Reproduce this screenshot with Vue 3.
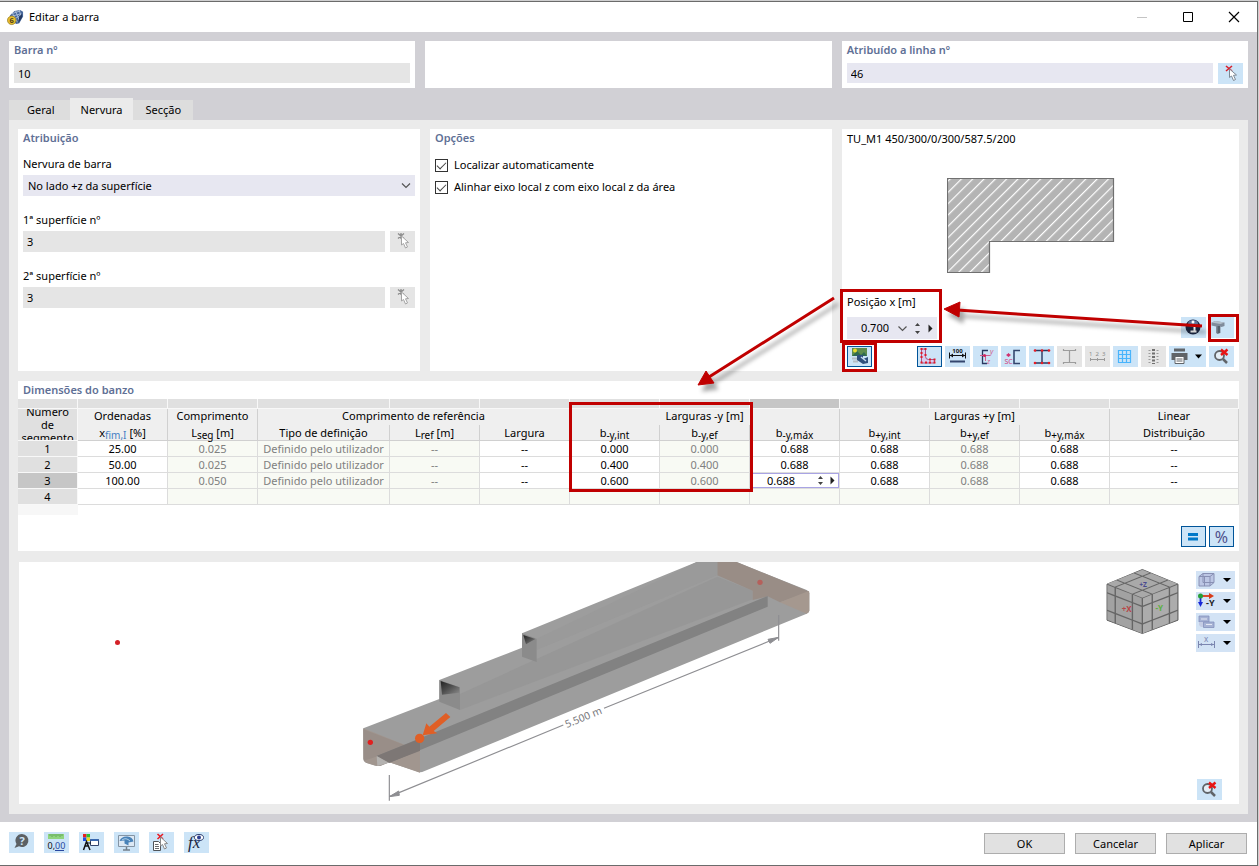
<script setup>
import { ref } from 'vue'

const icons = {
  pick: '<path d="M8 3l6 5M14 3L8 8" stroke="#d8202c" stroke-width="1.6"/><path d="M11.5 6v8.500l2-1.500 2 4.500 2-1-2-4.200 3-.3z" fill="#fff" stroke="#7c8894"/>',
  pickOff: '<path d="M8 2.500l6 5M14 2.500L8 7.500M11 2v6" stroke="#8c8c8c" stroke-width="1.300"/><path d="M11.500 5v9l2-1.500 2 4.500 2-1-2-4.200 3-.3z" fill="#fff" stroke="#a4a4a4"/>',
  image: '<rect x="5" y="2" width="15" height="8" fill="#5f8c4c"/><path d="M5 10l5-5 4 4 3-3 3 4z" fill="#2f6a50"/><circle cx="8" cy="4.500" r="2" fill="#e8dc30"/><path d="M5 12.500h6M6 15.500h5" stroke="#b4bcc4" stroke-width="2"/><path d="M10 9h6v4l5-2v6l-5 1-6-4z" fill="#2f4f7c"/><path d="M14 11l5 4" stroke="#c8dcf0" stroke-width="1.500"/>',
  ell: '<path d="M4.500 3h4v7.500q0 3 3 3h6V17h-13z" fill="#d8ccee" stroke="#a0306c" stroke-width=".8"/><g fill="#e01828"><path d="M3.500 2h2v2h-2zM7.500 2h2v2h-2zM3.500 6h2v2h-2zM3.500 10h2v2h-2zM3.500 15.500h2v2h-2zM8 15.500h2v2H8zM12 15.500h2v2h-2zM16.500 15.500h2v2h-2zM16.500 12.500h2v2h-2zM12 12.500h2v2h-2zM7.500 8h2v2h-2z"/></g>',
  hundred: '<text x="12.500" y="7" font-size="6" font-weight="700" text-anchor="middle" fill="#111">100</text><path d="M4.500 6.500v6M20.500 6.500v6M5 9.500h15" stroke="#111"/><path d="M5 9.500l3-2v4zM20 9.500l-3-2v4z" fill="#111"/><path d="M5 15.500h15" stroke="#34466e" stroke-width="2"/>',
  axes: '<path d="M15 4.500H9.500v13H14" stroke="#283860" stroke-width="1.300" fill="none"/><path d="M7 9.500h10M12.500 9v6" stroke="#d06090"/><circle cx="11.500" cy="9.500" r="1.600" fill="#d02860"/><text x="17" y="8" font-size="7" font-style="italic" fill="#d06090">y</text><text x="14" y="18" font-size="7" font-style="italic" fill="#d06090">z</text>',
  sc: '<circle cx="7.500" cy="9" r="1.600" fill="#d03070"/><path d="M5 9h5M7.500 7v4" stroke="#d03070" stroke-width=".7"/><text x="3.500" y="18" font-size="7" fill="#d04080">SC</text><path d="M19 4.500h-6v13h6" stroke="#34466e" stroke-width="1.600" fill="none"/>',
  beam: '<path d="M6 4.500h14M6 17h14M13 4.500V17" stroke="#283860" stroke-width="1.400"/><g fill="#e81c24"><circle cx="6" cy="4.500" r="1.300"/><circle cx="20" cy="4.500" r="1.300"/><circle cx="13" cy="4.500" r="1.300"/><circle cx="6" cy="17" r="1.300"/><circle cx="20" cy="17" r="1.300"/><circle cx="13" cy="17" r="1.300"/></g>',
  beamOff: '<path d="M6 4.500h13M6 16.500h13M12.500 4.500v12M6.500 3v2M18.500 3v2M6.500 16v2M18.500 16v2" stroke="#9c9c9c" stroke-width="1.200"/>',
  numbers: '<text x="4" y="9.500" font-size="6" fill="#8c8c8c">1</text><text x="10.500" y="9.500" font-size="6" fill="#8c8c8c">2</text><text x="17" y="9.500" font-size="6" fill="#8c8c8c">3</text><path d="M5 13.500h15M5.500 12v3M12.500 12v3M19.500 12v3" stroke="#9a9a9a"/>',
  grid: '<path d="M5.500 4.500h12v12h-12zM9.500 4.500v12M13.500 4.500v12M5.500 8.500h12M5.500 12.500h12" stroke="#48b4fc" fill="none" stroke-width="1.200"/>',
  stack: '<path d="M12.500 3v15" stroke="#707070" stroke-width="3" stroke-dasharray="2 1.500"/><path d="M8.500 4v13M16.500 4v13" stroke="#9c9c9c" stroke-width="2" stroke-dasharray="1 2"/>',
  print: '<path d="M5 2.500h11v3H5z" fill="#606468"/><path d="M2.500 7h16v7h-16z" fill="#606468"/><path d="M6 10.500h9v7H6z" fill="#fff" stroke="#606468"/><path d="M7.500 13h6M7.500 15h6" stroke="#606468"/><path d="M26 8.500h7l-3.500 4z" fill="#000"/>',
  zoomOff: '<circle cx="10.500" cy="9.500" r="4.500" fill="#e4eef6" stroke="#606468" stroke-width="1.800"/><path d="M14 13l4 4" stroke="#606468" stroke-width="2.500"/><path d="M12 3.500l6.500 5.500M18.500 3.500L12 9" stroke="#e81414" stroke-width="2.400"/>',
  info: '<circle cx="12" cy="10" r="7.500" fill="#1c2844"/><ellipse cx="12" cy="6.500" rx="5" ry="3.500" fill="#62759a"/><path d="M10 8h3.500v6M9.500 14.500h6" stroke="#fff" stroke-width="2" fill="none"/><circle cx="12" cy="5" r="1.500" fill="#fff"/>',
  tee: '<path d="M2.500 5.500l4-1.500 9 1.500V9l-3 1-1-.5V16l-3 1-1.500-1V9.500l-4.500-1z" fill="#808c9c"/><path d="M2.500 5.500l4-1.500 9 1.500-4 1.500z" fill="#b4c0cc"/><path d="M8.500 9v7.500l2.500-.8V9z" fill="#56626e"/>',
  equal: '<path d="M7 8.500h10M7 13h10" stroke="#0078c8" stroke-width="3"/>',
  help: '<path d="M13 2a6.500 6.500 0 1 1-3 12.300L5.500 16l2-4A6.500 6.500 0 0 1 13 2z" fill="#5c6064"/><text x="13" y="12.500" font-size="11" font-weight="700" text-anchor="middle" fill="#cce4f7">?</text>',
  decimals: '<path d="M4 2h16v5H4z" fill="#8fd47e"/><path d="M6 2v2M8 2v3M10 2v2M12 2v3M14 2v2M16 2v3M18 2v2" stroke="#589c50" stroke-width=".8"/><text x="3.500" y="16.500" font-size="9" fill="#111">0,<tspan fill="#2848a0">00</tspan></text><path d="M11 18.500h9" stroke="#2848a0"/>',
  display: '<path d="M4 2h3.500v3.500H4z" fill="#e82020"/><path d="M7.500 2H11v3.500H7.500z" fill="#30c030"/><path d="M4 5.500h3.500V9H4z" fill="#2050e0"/><path d="M7.500 5.500H11V9H7.500z" fill="#f0d820"/><path d="M4.500 18L7.500 9.500 11 18M5.500 14h4.500" stroke="#111" stroke-width="1.500" fill="none"/><path d="M11.500 7.500h8v6h-8z" fill="#fff" stroke="#34466e"/><path d="M11.500 8h8" stroke="#3868b0" stroke-width="2"/><path d="M7 11h5" stroke="#111"/>',
  monitor: '<path d="M4.500 3.500h16v11h-16z" fill="#dce8f4" stroke="#8494a4"/><path d="M5.500 9q2-5 8-4.500 5 .5 6 5l-5 1v3l-4-2v-3z" fill="#4882b8"/><path d="M8 8q4-3 8 1" stroke="#b0d0ea" fill="none"/><path d="M12.500 15v2.500M9 18h7" stroke="#74808c" stroke-width="1.500"/>',
  listPick: '<path d="M8.500 2l5.500 5M14 2L8.500 7" stroke="#e81c24" stroke-width="1.600"/><path d="M4.500 9.500h5l2 2v7h-7z" fill="#fff" stroke="#505458"/><path d="M6 12.500h3.500M6 14.500h4M6 16.500h4" stroke="#404448" stroke-width=".8"/><path d="M11.500 5v9l2-1.500 2 4.500 2-1-2-4.200 3-.3z" fill="#fff" stroke="#888"/>',
  formula: '<text x="4" y="16" font-size="17" font-style="italic" font-family="Liberation Serif, serif" fill="#18243c">fx</text><ellipse cx="15" cy="5.500" rx="4.500" ry="3" fill="#fff" stroke="#2c3e70"/><circle cx="15" cy="5.500" r="2" fill="#2c3e90"/>',
  cube: '<path d="M3 5.500l4-3h11v9l-4 3.500H3z" fill="#bcc6e4" stroke="#8890b4"/><path d="M3 5.500h11V15M14 5.500l4-3M7 2.500v9M7 11.500h11M8.500 5.500V15" stroke="#8890b4" fill="none"/>',
  viewY: '<path d="M5 4h10" stroke="#d83c18" stroke-width="1.800"/><path d="M13 1l5 3-5 3z" fill="#d83c18"/><path d="M4.500 4v7" stroke="#1828d8" stroke-width="1.800"/><path d="M2 10h5l-2.500 5z" fill="#1828d8"/><circle cx="4.500" cy="4" r="2.500" fill="#28a038"/><text x="10" y="14" font-size="9" font-weight="700" fill="#222">-Y</text>',
  solids: '<path d="M3 3h10v6H3z" fill="#a6b2d4" stroke="#8490bc" stroke-width=".8"/><path d="M3 9h5v5H5l-2-2z" fill="#c4cce4"/><path d="M7.500 9h10.500v5.500H7.500z" fill="#a6b2d4" stroke="#8490bc" stroke-width=".8"/><path d="M5 6h6M10 11.500h6" stroke="#e4e8f4"/>',
  dimX: '<path d="M2.500 7v7M18.500 7v7M2.500 10.500h16" stroke="#7c86b0"/><path d="M3 10.500l3-1.500v3zM18 10.500l-3-1.500v3z" fill="#7c86b0"/><text x="8" y="8" font-size="8" fill="#7c86b0">x</text>'
}

const sectionTools = [
  { id: 'ell', name: 'Contorno', active: true }, { id: 'hundred', name: 'Cotas' },
  { id: 'axes', name: 'Eixos' }, { id: 'sc', name: 'Centro de corte' },
  { id: 'beam', name: 'Pontos' }, { id: 'beamOff', name: 'Perfil', off: true },
  { id: 'numbers', name: 'Numeração', off: true }, { id: 'grid', name: 'Grelha' },
  { id: 'stack', name: 'Tensões', off: true }, { id: 'print', name: 'Imprimir', wide: true },
  { id: 'zoomOff', name: 'Repor vista' }
]
const viewTools = [
  { id: 'cube', name: 'Vista' }, { id: 'viewY', name: 'Direção' },
  { id: 'solids', name: 'Modelo' }, { id: 'dimX', name: 'Dimensões' }
]
const footerTools = [
  { id: 'help', name: 'Ajuda' }, { id: 'decimals', name: 'Unidades' },
  { id: 'display', name: 'Apresentação' }, { id: 'monitor', name: 'Visualização' },
  { id: 'listPick', name: 'Selecionar' }, { id: 'formula', name: 'Fórmulas' }
]

const tabs = ['Geral', 'Nervura', 'Secção']
const activeTab = ref('Nervura')
const member = ref('10')
const line = ref('46')
const surface1 = ref('3')
const surface2 = ref('3')
const autoLocate = ref(true)
const alignAxis = ref(true)
const position = ref('0.700')
const editValue = ref('0.688')

const colWidths = [60, 90, 90, 132, 90, 90, 90, 90, 90, 90, 90, 90]
const subHeads = [
  { t: 'x', s: 'fim,I', u: ' [%]', blue: true }, { t: 'L', s: 'seg', u: ' [m]' },
  { t: 'Tipo de definição' }, { t: 'L', s: 'ref', u: ' [m]' }, { t: 'Largura' },
  { t: 'b', s: '-y,int' }, { t: 'b', s: '-y,ef' }, { t: 'b', s: '-y,máx' },
  { t: 'b', s: '+y,int' }, { t: 'b', s: '+y,ef' }, { t: 'b', s: '+y,máx' },
  { t: 'Distribuição' }
]
const readonlyCols = [1, 2, 3, 6, 9]
const def = 'Definido pelo utilizador'
const rows = [
  ['25.00', '0.025', def, '--', '--', '0.000', '0.000', '0.688', '0.688', '0.688', '0.688', '--'],
  ['50.00', '0.025', def, '--', '--', '0.400', '0.400', '0.688', '0.688', '0.688', '0.688', '--'],
  ['100.00', '0.050', def, '--', '--', '0.600', '0.600', '0.688', '0.688', '0.688', '0.688', '--'],
  ['', '', '', '', '', '', '', '', '', '', '', '']
]
const isReadonly = (r, c) => readonlyCols.includes(c) || (r === 3 && c > 0)

// Navigation cube: each face is a 3 x 3 grid of tiles.
function faceTiles(o, u, v) {
  const cuts = [[0, 0.21], [0.25, 0.71], [0.75, 1]]
  const at = (a, b) => `${o[0] + u[0] * a + v[0] * b},${o[1] + u[1] * a + v[1] * b}`
  return cuts.flatMap(([a, b]) => cuts.map(([c, d]) => [at(a, c), at(b, c), at(b, d), at(a, d)].join(' ')))
}
const cubeTiles = [
  { fill: '#a9a9a9', tiles: faceTiles([187, 45], [105, 42], [-105, 42]) },
  { fill: '#a2a2a2', tiles: faceTiles([82, 90], [103, 40], [0, 105]) },
  { fill: '#acacac', tiles: faceTiles([292, 90], [-103, 40], [0, 105]) }
]
</script>

<template>
  <div class="desktop">
    <main class="window">
      <header class="titlebar">
        <svg class="appicon" viewBox="0 0 18 18" aria-hidden="true">
          <path d="M3 7l5-5 6-1 3 2v5l-4 7-3 1-5-3z" fill="#48689c" />
          <path d="M5 5l9-3M4 8l11-3M6 12l9-6M9 2l4 10M13 1l2 8M6 5l5 9" stroke="#bccce4" stroke-width=".8" />
          <path d="M13 8l3-3v4l-4 6z" fill="#243860" />
          <circle cx="5" cy="12" r="4.500" fill="#e8c030" stroke="#8c7018" stroke-width=".7" />
          <text x="5" y="15" font-size="8" font-weight="700" text-anchor="middle" fill="#544418">6</text>
        </svg>
        <h1>Editar a barra</h1>
        <div class="winbtns">
          <button type="button" aria-label="Minimizar" disabled><svg viewBox="0 0 12 12"><path d="M1 6.500h10" stroke="#c4c4c4" /></svg></button>
          <button type="button" aria-label="Maximizar"><svg viewBox="0 0 12 12"><path d="M1.500 1.500h9v9h-9z" fill="none" stroke="#000" /></svg></button>
          <button type="button" aria-label="Fechar"><svg viewBox="0 0 12 12"><path d="M1 1l10 10M11 1L1 11" stroke="#000" stroke-width="1.200" /></svg></button>
        </div>
      </header>

      <div class="body">
        <div class="top">
          <section class="card">
            <h2><label for="member">Barra nº</label></h2>
            <input id="member" v-model="member" class="field short ro" readonly />
          </section>
          <section class="card"></section>
          <section class="card">
            <h2><label for="line">Atribuído a linha nº</label></h2>
            <div class="row">
              <input id="line" v-model="line" class="field short" />
              <button type="button" class="tool" aria-label="Selecionar linha"><svg viewBox="0 0 25 21" v-html="icons.pick"></svg></button>
            </div>
          </section>
        </div>

        <nav class="tabs">
          <button v-for="t in tabs" :key="t" type="button" :class="{ on: t === activeTab }" @click="activeTab = t">{{ t }}</button>
        </nav>

        <div class="panel">
          <div class="cols">
            <section class="card">
              <h2>Atribuição</h2>
              <div class="groups">
                <div class="group">
                  <label for="rib">Nervura de barra</label>
                  <div class="selectbox">
                    <select id="rib"><option>No lado +z da superfície</option></select>
                    <svg viewBox="0 0 9 6"><path d="M.5 .5l4 4 4-4" fill="none" stroke="#555" stroke-width="1.200" /></svg>
                  </div>
                </div>
                <div class="group">
                  <label for="s1">1ª superfície nº</label>
                  <div class="row">
                    <input id="s1" v-model="surface1" class="field ro" readonly />
                    <button type="button" class="tool off" disabled aria-label="Selecionar 1ª superfície"><svg viewBox="0 0 25 21" v-html="icons.pickOff"></svg></button>
                  </div>
                </div>
                <div class="group">
                  <label for="s2">2ª superfície nº</label>
                  <div class="row">
                    <input id="s2" v-model="surface2" class="field ro" readonly />
                    <button type="button" class="tool off" disabled aria-label="Selecionar 2ª superfície"><svg viewBox="0 0 25 21" v-html="icons.pickOff"></svg></button>
                  </div>
                </div>
              </div>
            </section>

            <section class="card">
              <h2>Opções</h2>
              <div class="checks">
                <label><input v-model="autoLocate" type="checkbox" /><span>Localizar automaticamente</span></label>
                <label><input v-model="alignAxis" type="checkbox" /><span>Alinhar eixo local z com eixo local z da área</span></label>
              </div>
            </section>

            <section class="card profile">
              <p class="pname">TU_M1 450/300/0/300/587.5/200</p>
              <svg class="shape" viewBox="0 0 170 98" aria-hidden="true">
                <defs>
                  <pattern id="hatch" width="8" height="8" patternUnits="userSpaceOnUse" patternTransform="rotate(45)">
                    <rect width="8" height="8" fill="#b4b4b4" />
                    <rect x="3" width="1.200" height="8" fill="#fff" />
                  </pattern>
                </defs>
                <path d="M.5 1.500h166v63h-124v31H.5z" fill="url(#hatch)" stroke="#707070" stroke-width="1.200" />
              </svg>
              <div class="posrow">
                <div>
                  <label class="poslabel" for="pos">Posição x [m]</label>
                  <div class="posfield">
                    <input id="pos" v-model="position" />
                    <button type="button" aria-label="Lista"><svg viewBox="0 0 9 21"><path d="M.5 8.500l4 4 4-4" fill="none" stroke="#555" stroke-width="1.200" /></svg></button>
                    <button type="button" aria-label="Passo"><svg viewBox="0 0 5 21"><path d="M0 8l2.500-3L5 8zM0 13l2.500 3L5 13z" fill="#444" /></svg></button>
                    <button type="button" aria-label="Seguinte"><svg viewBox="0 0 5 21"><path d="M.5 6.500v8l4-4z" fill="#222" /></svg></button>
                  </div>
                </div>
                <div class="tools">
                  <button type="button" class="tool" aria-label="Informação"><svg viewBox="0 0 25 21" v-html="icons.info"></svg></button>
                  <button type="button" class="tool" aria-label="Secção em T"><svg viewBox="0 0 25 21" v-html="icons.tee"></svg></button>
                </div>
              </div>
              <div class="toolrow">
                <button type="button" class="tool active" aria-label="Imagem"><svg viewBox="0 0 25 21" v-html="icons.image"></svg></button>
                <div class="tools">
                  <button v-for="b in sectionTools" :key="b.id" type="button" class="tool" :class="{ active: b.active, off: b.off, wide: b.wide }" :disabled="b.off" :aria-label="b.name">
                    <svg :viewBox="b.wide ? '0 0 37 21' : '0 0 25 21'" v-html="icons[b.id]"></svg>
                  </button>
                </div>
              </div>
            </section>
          </div>

          <section class="card dims">
            <h2>Dimensões do banzo</h2>
            <table>
              <colgroup>
                <col v-for="(w, i) in colWidths" :key="i" :class="'w' + w" />
                <col />
              </colgroup>
              <thead>
                <tr class="strip"><td v-for="n in 13" :key="n" :class="{ sel: n === 9 }"></td></tr>
                <tr class="h1">
                  <th rowspan="2" class="num"><div>Número de segmento</div></th>
                  <th>Ordenadas</th>
                  <th>Comprimento</th>
                  <th colspan="3" class="open">Comprimento de referência</th>
                  <th colspan="3">Larguras -y [m]</th>
                  <th colspan="3">Larguras +y [m]</th>
                  <th>Linear</th>
                </tr>
                <tr class="h2">
                  <th v-for="(h, i) in subHeads" :key="i" :class="{ open: i === 4 }">{{ h.t }}<sub v-if="h.s" :class="{ blue: h.blue }">{{ h.s }}</sub>{{ h.u }}</th>
                </tr>
              </thead>
              <tbody>
                <tr v-for="(r, ri) in rows" :key="ri">
                  <th scope="row" :class="{ sel: ri === 2 }">{{ ri + 1 }}</th>
                  <td v-for="(c, ci) in r" :key="ci" :class="{ ro: isReadonly(ri, ci) }">
                    <div v-if="ri === 2 && ci === 7" class="editor">
                      <input v-model="editValue" aria-label="b-y,máx" />
                      <button type="button" aria-label="Passo"><svg viewBox="0 0 5 13"><path d="M0 5l2.500-3L5 5zM0 8l2.500 3L5 8z" fill="#444" /></svg></button>
                      <button type="button" aria-label="Seguinte"><svg viewBox="0 0 5 13"><path d="M.5 2.500v8l4-4z" fill="#222" /></svg></button>
                    </div>
                    <template v-else>{{ c }}</template>
                  </td>
                </tr>
              </tbody>
            </table>
            <div class="gutter"></div>
            <div class="tools right">
              <button type="button" class="tool active" aria-label="Igual"><svg viewBox="0 0 25 21" v-html="icons.equal"></svg></button>
              <button type="button" class="tool active pct">%</button>
            </div>
          </section>

          <section class="card view">
            <svg class="scene" viewBox="19 562 1220 242" preserveAspectRatio="xMinYMin slice" role="img" aria-label="Modelo 3D da barra">
              <defs>
                <linearGradient id="hole" x1="0" y1="0" x2="1" y2="1">
                  <stop offset="0" stop-color="#222" /><stop offset=".45" stop-color="#4c4c4c" /><stop offset="1" stop-color="#8c8c8c" />
                </linearGradient>
              </defs>
              <circle cx="117.500" cy="642.500" r="2.500" fill="#d42027" />
              <g transform="translate(350 550) scale(.33333)">
                <path d="M40 535L268 447V390L435 325 516 293V250L1040 36H1160L1370 120Q1378 124 1378 130V182Q1378 187 1370 191L222 664Q210 670 198 663L118 637 92 647Q82 650 72 646L48 638Q40 634 40 626Z" fill="#9d9d9d" />
                <path d="M330 432L1102 80 1208 122V148L330 480Z" fill="#979797" />
                <path d="M1040 36H1160L1378 125 1290 157 1253 139 1208 150V122L1102 76V36Z" fill="#998d86" />
                <path d="M1290 157L1376 123Q1378 126 1378 130V182Q1378 187 1370 191Z" fill="#a5988f" />
                <path d="M1040 36H1102V76L960 136 560 300V266Z" fill="#9a9a9a" />
                <path d="M40 535L210 603V668L118 637 92 647Q82 650 72 646L48 638Q40 634 40 626Z" fill="#a1968f" />
                <path d="M40 538L210 603 118 637 85 618 42 632Z" fill="#998e88" />
                <path d="M80 618L1253 138V170L118 638Z" fill="#828282" />
                <path d="M80 618L210 566V602L118 638Z" fill="#7d7775" />
                <path d="M80 618L116 638 82 648Z" fill="#b4b2b0" />
                <path d="M268 390L330 412V480L268 455Z" fill="#8b8b8b" />
                <path d="M272 393L328 412V428L276 434Z" fill="url(#hole)" />
                <path d="M516 250L560 266V336L516 320Z" fill="#8b8b8b" />
                <path d="M520 255L556 267 528 283Z" fill="url(#hole)" />
                <circle cx="61" cy="577" r="8" fill="#e0201f" />
                <circle cx="1230" cy="97" r="8" fill="#b5605b" />
                <circle cx="209" cy="565" r="14" fill="#e05f26" />
                <path d="M218 556L229 520 238 530 288 489 301 501 251 543 262 550Z" fill="#e05f26" />
                <path d="M118 675V752M1286 195V272M118 740L640 525M762 475L1286 262" stroke="#8e8e92" stroke-width="3.500" fill="none" />
                <path d="M118 740L146 723 148 736ZM1286 262L1254 268 1260 280Z" fill="#8e8e92" stroke="#8e8e92" stroke-width="3" />
                <text transform="translate(704 512) rotate(-22)" font-size="31" text-anchor="middle" fill="#77777b">5.500 m</text>
              </g>
            </svg>
            <svg class="navcube" viewBox="78 40 219 200" aria-label="Cubo de navegação">
              <path d="M187 44L294 88V196L187 236 81 196V88Z" fill="#656565" stroke="#656565" stroke-width="3" stroke-linejoin="round" />
              <g v-for="(f, i) in cubeTiles" :key="i" :fill="f.fill">
                <polygon v-for="p in f.tiles" :key="p" :points="p" />
              </g>
              <text x="189" y="96" font-size="20" font-weight="700" text-anchor="middle" fill="#4a4a90">+Z</text>
              <text x="140" y="171" font-size="24" font-weight="700" text-anchor="middle" fill="#b84848">+X</text>
              <text x="238" y="168" font-size="24" font-weight="700" text-anchor="middle" fill="#5cb040">-Y</text>
            </svg>
            <div class="viewtools">
              <button v-for="b in viewTools" :key="b.id" type="button" :aria-label="b.name">
                <svg viewBox="0 0 21 18" v-html="icons[b.id]"></svg>
                <svg class="drop" viewBox="0 0 8 4"><path d="M0 0h8L4 4z" /></svg>
              </button>
            </div>
            <button type="button" class="tool reset" aria-label="Repor vista"><svg viewBox="0 0 25 21" v-html="icons.zoomOff"></svg></button>
          </section>
        </div>
      </div>

      <footer class="footer">
        <div class="ftools">
          <button v-for="b in footerTools" :key="b.id" type="button" class="tool" :aria-label="b.name"><svg viewBox="0 0 25 21" v-html="icons[b.id]"></svg></button>
        </div>
        <div class="actions">
          <button type="button">OK</button>
          <button type="button">Cancelar</button>
          <button type="button">Aplicar</button>
        </div>
      </footer>
    </main>

    <svg class="marks" width="1259" height="866" aria-hidden="true">
      <g class="arrows" fill="#c00000" stroke="#c00000">
        <path d="M1202 326L957 310M834 298L709 377" stroke-width="3" />
        <path d="M944 309L960 302 959 317ZM698 385L706 371 714 383Z" stroke-width="1" />
      </g>
      <g fill="none" stroke="#c00000" stroke-width="3">
        <rect x="841.500" y="290.500" width="99" height="51" />
        <rect x="843.500" y="343.500" width="32" height="27" />
        <rect x="1209.500" y="315.500" width="28" height="25" />
        <rect x="570.500" y="403.500" width="181" height="87" />
      </g>
    </svg>
  </div>
</template>

<style>
body { margin: 0; background: #cfcfd0; }
</style>

<style scoped>
* { box-sizing: border-box; }
.desktop { position: relative; min-height: 100vh; padding: 1px 1px 1px 0; background: #cfcfd0; font: 11px/16px "Noto Sans", "Open Sans", sans-serif; color: #000; }
button, input, select { font: inherit; color: inherit; margin: 0; }
button { border: 0; padding: 0; background: none; }
h1, h2, p { margin: 0; font-size: 11px; font-weight: 400; }
.window { border: solid #6b6b6b; border-width: 1px 1px 1px 0; background: #fff; }
.titlebar { display: flex; align-items: center; height: 30px; padding-left: 7px; }
.titlebar h1 { flex: 1; margin-left: 5px; }
.appicon { width: 17px; height: 17px; }
.winbtns { display: flex; }
.winbtns button { width: 46px; height: 30px; display: flex; align-items: center; justify-content: center; }
.winbtns svg { width: 12px; height: 12px; }
.body { background: #d1d0d5; padding: 9px 9px 8px; }
.top { display: grid; grid-template-columns: repeat(3, 1fr); gap: 10px; margin-bottom: 10px; }
.card { background: #fff; padding: 0 5px 4px; min-width: 0; }
.top .card { min-height: 47px; }
h2 { line-height: 18px; font-weight: 600; color: #5f7096; }
.top h2 { margin-bottom: 4px; }
.row { display: flex; gap: 5px; }
.field { display: block; width: 100%; min-width: 0; height: 21px; border: 0; padding: 0 4px; background: #e7e7f1; }
.field.ro { background: #e5e5e5; }
.field.short { height: 20px; }
.tool { flex: none; width: 25px; height: 21px; background: #cce4f7; display: block; }
.tool svg { display: block; width: 100%; height: 100%; }
.tool.wide { width: 37px; }
.tool.off { background: #e5e5e5; }
.tool.active { box-shadow: inset 0 0 0 1px #005499; }
.tools { display: flex; gap: 3px; }
.tabs { display: flex; align-items: flex-end; height: 22px; }
.tabs button { height: 20px; padding: 0 12px 0 13px; background: #dddddd; }
.tabs button:first-child { padding: 0 15px 0 18px; }
.tabs .on { height: 22px; background: #ebebeb; padding: 2px 10px 0 11px; }
.panel { background: #ebebeb; padding: 9px 9px 10px; }
.cols { display: grid; grid-template-columns: 402fr 402fr 397fr; gap: 10px; margin-bottom: 10px; }
.groups { display: grid; gap: 14px; margin-top: 7px; }
.group > label { display: block; line-height: 19px; margin-bottom: 2px; }
.selectbox { position: relative; }
.selectbox select { display: block; width: 100%; height: 21px; border: 0; border-radius: 0; appearance: none; background: #e7e7f1; padding: 0 5px; }
.selectbox svg { position: absolute; right: 4px; top: 8px; width: 10px; height: 6px; pointer-events: none; }
.checks { display: grid; margin-top: 7px; }
.checks label { display: flex; align-items: center; gap: 6px; height: 22px; }
.checks input { appearance: none; width: 13px; height: 13px; border: 1px solid #333; display: grid; place-items: center; }
.checks input:checked::after { content: ""; width: 8px; height: 4px; border: solid #444; border-width: 0 0 1px 1px; transform: translateY(-1px) rotate(-45deg); }
.profile { display: flex; flex-direction: column; min-height: 242px; }
.pname { line-height: 20px; }
.shape { display: block; width: 170px; height: 98px; margin: 28px 0 0 100px; }
.posrow { display: flex; justify-content: space-between; align-items: flex-end; margin-top: auto; }
.posrow > .tools { margin-bottom: 1px; }
.poslabel { display: block; line-height: 20px; margin-bottom: 5px; }
.posfield { display: flex; width: 90px; height: 22px; background: #e7e7f1; padding-right: 4px; }
.posfield input { flex: 1; min-width: 0; border: 0; background: none; text-align: right; padding: 0 9px 0 0; }
.posfield button { margin-left: 8px; }
.posfield input + button { margin-left: 0; }
.posfield svg { display: block; height: 21px; width: auto; }
.toolrow { display: flex; justify-content: space-between; margin-top: 7px; }
.dims { padding: 0 0 4px; margin-bottom: 11px; }
.dims h2 { padding-left: 5px; }
table { width: 100%; table-layout: fixed; border-collapse: separate; border-spacing: 0; }
.w60 { width: 60px; }
.w90 { width: 90px; }
.w132 { width: 132px; }
td, th { padding: 0; height: 16px; line-height: 15px; font-weight: 400; text-align: center; white-space: nowrap; border-right: 1px solid #dcdcdc; border-bottom: 1px solid #dcdcdc; }
.strip td { height: 10px; line-height: 9px; background: #e0e0e0; border-color: #f8f8f8; }
.strip .sel { background: #c6c6c6; }
thead th { background: #efefef; border-color: #d0d0d0; }
.h1 th { border-bottom: 0; line-height: 14px; vertical-align: top; }
thead .open { border-right-color: #efefef; }
.h1 .num { background: #e0e0e0; border-color: #f8f8f8; border-bottom: 1px solid #f8f8f8; }
.num div { display: flex; align-items: center; justify-content: center; height: 31px; line-height: 13px; white-space: normal; overflow: hidden; padding: 0 4px; }
tbody th { background: #e0e0e0; border-color: #f8f8f8; }
tbody .sel { background: #c6c6c6; }
sub { font-size: 10px; line-height: 0; vertical-align: -2px; }
.blue { color: #4480c4; }
td.ro { background: #f8faf4; color: #808080; }
.editor { display: flex; align-items: center; height: 15px; border: 1px solid #a9a4e4; padding: 0 3px 0 10px; }
.editor input { flex: 1; min-width: 0; height: 13px; border: 0; padding: 0 0 0 6px; background: none; }
.editor button { margin-left: 7px; }
.editor svg { display: block; width: 5px; height: 13px; }
.gutter { width: 60px; height: 10px; background: #f7f7f7; }
.right { justify-content: flex-end; margin: 11px 5px 0 0; }
.pct { font-size: 16px; line-height: 20px; color: #50508c; text-align: center; }
.view { position: relative; padding: 0; margin-left: 1px; overflow: hidden; }
.scene { display: block; width: 100%; height: 242px; }
.navcube { position: absolute; right: 60px; top: 6px; width: 73px; height: 67px; }
.viewtools { position: absolute; right: 4px; top: 9px; display: grid; gap: 3px; }
.viewtools button { display: flex; align-items: center; width: 39px; height: 18px; background: #d3e3f5; }
.viewtools svg { width: 21px; height: 18px; }
.viewtools .drop { width: 8px; height: 4px; margin-left: 6px; }
.reset { position: absolute; right: 17px; bottom: 4px; }
.footer { display: flex; justify-content: space-between; align-items: flex-start; padding: 10px 10px 11px 9px; }
.ftools, .actions { display: flex; gap: 10px; }
.actions button { width: 81px; height: 21px; margin-top: 1px; background: #e1e1e1; border: 1px solid #adadad; }
.marks { position: absolute; left: 0; top: 0; pointer-events: none; }
.arrows { filter: drop-shadow(4px 6px 2px rgba(0, 0, 0, .35)); }
text { font-family: "Noto Sans", "Open Sans", sans-serif; }
</style>
